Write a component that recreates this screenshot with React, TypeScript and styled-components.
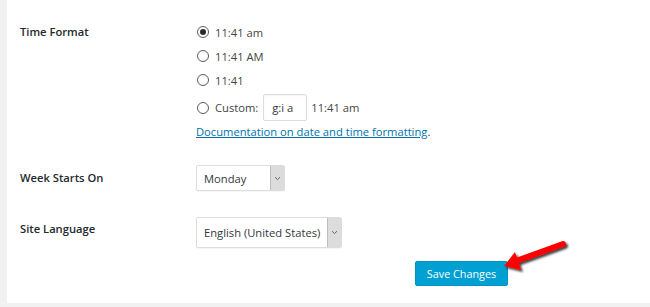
import React from "react";
import styled, { createGlobalStyle } from "styled-components";

const GlobalStyle = createGlobalStyle`
  html, body { margin: 0; padding: 0; background: #f1f1f1; }
  body { font-family: "Open Sans", "Liberation Sans", sans-serif; }
  #root { width: 650px; height: 307px; }
`;

const Page = styled.div`
  position: relative;
  width: 650px;
  height: 307px;
  display: flex;
  background: #f1f1f1;
  overflow: hidden;
`;

const Panel = styled.main`
  margin-left: 7px;
  flex: 1;
  height: 303px;
  background: #fff;
  padding-left: 13px;
  box-sizing: border-box;
  color: #444;
  font-size: 11.2px;
`;

const FormRow = styled.div<{ $top: number }>`
  display: grid;
  grid-template-columns: 176px 1fr;
  padding-top: ${(p) => p.$top}px;
`;

const Label = styled.div<{ $lh: number }>`
  font-weight: 600;
  color: #23282d;
  font-size: 11.2px;
  line-height: ${(p) => p.$lh}px;
`;

const Options = styled.div`
  display: flex;
  flex-direction: column;
`;

const Option = styled.label<{ $h: number }>`
  display: flex;
  align-items: center;
  gap: 6px;
  height: ${(p) => p.$h}px;
  color: #444;
`;

const Radio = styled.span<{ $checked?: boolean }>`
  width: 12px;
  height: 12px;
  box-sizing: border-box;
  border-radius: 50%;
  border: 1px solid #5c5c5c;
  display: inline-flex;
  align-items: center;
  justify-content: center;
  margin-left: 1px;
  &::after {
    content: "";
    width: 6px;
    height: 6px;
    border-radius: 50%;
    background: ${(p) => (p.$checked ? "#2b2b2b" : "transparent")};
  }
`;

const TextInput = styled.span`
  display: inline-flex;
  align-items: center;
  box-sizing: border-box;
  width: 44px;
  height: 27px;
  border: 1px solid #ddd;
  border-radius: 2px;
  padding-left: 8px;
  color: #32373c;
  box-shadow: inset 0 1px 2px rgba(0, 0, 0, 0.04);
  margin-left: -1px;
`;

const Preview = styled.span`
  margin-left: -2px;
`;

const DocLink = styled.div`
  line-height: 18px;
  color: #444;
  a {
    color: #0073aa;
    text-decoration: underline;
  }
`;

const Select = styled.div<{ $w: number; $h: number }>`
  display: flex;
  width: ${(p) => p.$w}px;
  height: ${(p) => p.$h}px;
  box-sizing: border-box;
  border: 1px solid #ddd;
  border-radius: 2px;
  background: #fff;
  color: #32373c;
  box-shadow: 0 1px 1px rgba(0, 0, 0, 0.04);
`;

const SelectText = styled.span`
  flex: 1;
  min-width: 0;
  overflow: hidden;
  display: flex;
  align-items: center;
  padding-left: 7px;
  white-space: nowrap;
`;

const SelectArrow = styled.span`
  flex: none;
  width: 13px;
  background: #dcdcdc;
  border-left: 1px solid #bdbdbd;
  display: flex;
  align-items: center;
  justify-content: center;
`;

const ButtonRow = styled.div`
  padding-top: 13px;
  padding-left: 395px;
`;

const SaveButton = styled.button`
  width: 93px;
  height: 25px;
  border: 1px solid #0094c2;
  border-radius: 2px;
  background: #00a0d2;
  color: #fff;
  font-family: "Open Sans", "Liberation Sans", sans-serif;
  font-size: 10.8px;
  padding: 0;
  cursor: pointer;
`;

const ArrowOverlay = styled.svg`
  position: absolute;
  left: 495px;
  top: 232px;
  overflow: visible;
`;

const Chevron = () => (
  <svg width="7" height="5" viewBox="0 0 7 5">
    <path d="M1 1.2 L3.5 3.6 L6 1.2" fill="none" stroke="#666" strokeWidth="1" />
  </svg>
);

export default function App() {
  return (
    <>
      <GlobalStyle />
      <Page>
        <Panel>
          <FormRow $top={20}>
            <Label $lh={24}>Time Format</Label>
            <Options>
              <Option $h={24}>
                <Radio $checked />
                11:41 am
              </Option>
              <Option $h={24}>
                <Radio />
                11:41 AM
              </Option>
              <Option $h={24}>
                <Radio />
                11:41
              </Option>
              <Option $h={31}>
                <Radio />
                Custom:
                <TextInput>g:i a</TextInput>
                <Preview>11:41 am</Preview>
              </Option>
              <DocLink>
                <a>Documentation on date and time formatting</a>.
              </DocLink>
            </Options>
          </FormRow>
          <FormRow $top={24}>
            <Label $lh={26}>Week Starts On</Label>
            <Select $w={89} $h={26}>
              <SelectText>Monday</SelectText>
              <SelectArrow>
                <Chevron />
              </SelectArrow>
            </Select>
          </FormRow>
          <FormRow $top={26}>
            <Label $lh={24}>Site Language</Label>
            <Select $w={146} $h={31}>
              <SelectText>English (United States)</SelectText>
              <SelectArrow>
                <Chevron />
              </SelectArrow>
            </Select>
          </FormRow>
          <ButtonRow>
            <SaveButton>Save Changes</SaveButton>
          </ButtonRow>
        </Panel>
        <ArrowOverlay width="80" height="50" viewBox="0 0 80 50">
          <defs>
            <filter id="sh" x="-30%" y="-30%" width="160%" height="160%">
              <feDropShadow dx="2" dy="2" stdDeviation="1.2" floodColor="#000" floodOpacity="0.75" />
            </filter>
          </defs>
          <g filter="url(#sh)">
            <line x1="68" y1="12" x2="21" y2="29" stroke="#f00" strokeWidth="6" strokeLinecap="round" />
            <polygon points="9,34 20,20 26,38" fill="#f00" />
          </g>
        </ArrowOverlay>
      </Page>
    </>
  );
}
